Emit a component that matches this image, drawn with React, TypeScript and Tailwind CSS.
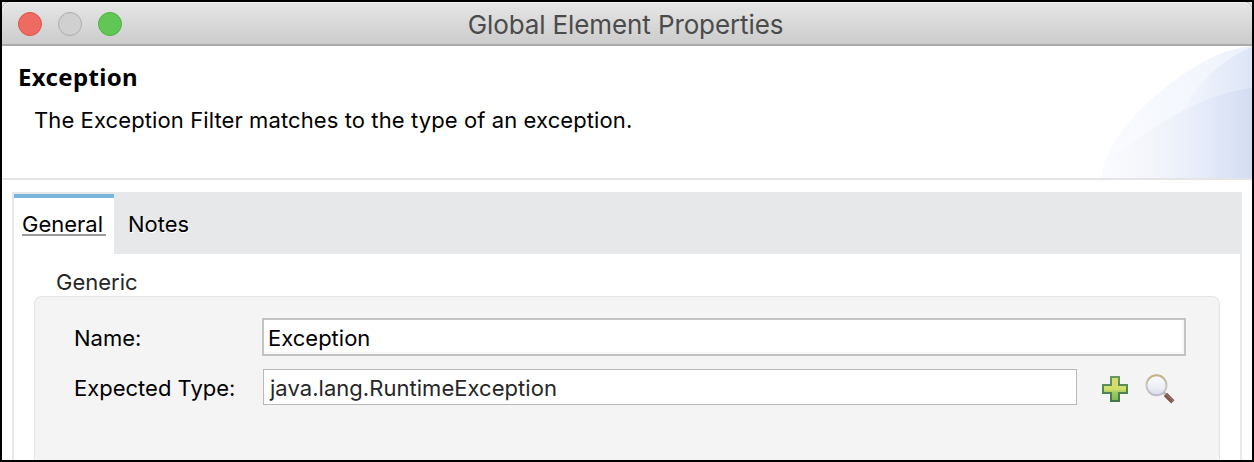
import React from "react";

function TrafficLights() {
  return (
    <div className="absolute left-[16px] top-[10px] flex gap-4">
      <span className="h-6 w-6 rounded-full border border-[#e0524a] bg-[#ed6b60]" />
      <span className="h-6 w-6 rounded-full border border-[#aeaeae] bg-[#d0d0d0]" />
      <span className="h-6 w-6 rounded-full border border-[#4eb141] bg-[#62c655]" />
    </div>
  );
}

function BannerArt() {
  return (
    <svg className="h-[132px] w-[150px]" viewBox="0 0 150 132" fill="none">
      <defs>
        <linearGradient id="outer" x1="0" y1="0" x2="150" y2="0" gradientUnits="userSpaceOnUse">
          <stop offset="0" stopColor="#f9fbff" />
          <stop offset="0.6" stopColor="#f4f7fd" />
          <stop offset="1" stopColor="#ecf1fb" />
        </linearGradient>
        <linearGradient id="middle" x1="80" y1="0" x2="150" y2="0" gradientUnits="userSpaceOnUse">
          <stop offset="0" stopColor="#f3f6fd" />
          <stop offset="1" stopColor="#dde5f6" />
        </linearGradient>
        <linearGradient id="lower" x1="0" y1="0" x2="150" y2="0" gradientUnits="userSpaceOnUse">
          <stop offset="0" stopColor="#f9fbff" />
          <stop offset="0.35" stopColor="#f3f5fa" />
          <stop offset="0.6" stopColor="#e9eefa" />
          <stop offset="0.85" stopColor="#dbe3f5" />
          <stop offset="1" stopColor="#d3dcf2" />
        </linearGradient>
      </defs>
      <path d="M0 132C1 101 31 68 58 46C86 23 116 3 150 0V132Z" fill="url(#outer)" />
      <path d="M80 68C91 42 115 16 150 1V60Z" fill="url(#middle)" />
      <path d="M0 132C3 119 11 111 21 104C59 75 101 48 150 42V132Z" fill="url(#lower)" />
    </svg>
  );
}

function PlusIcon() {
  return (
    <svg className="mt-px h-[28px] w-[28px]" viewBox="0 0 28 28">
      <defs>
        <linearGradient id="plus" x1="0" y1="2" x2="0" y2="26" gradientUnits="userSpaceOnUse">
          <stop offset="0" stopColor="#d5dc6c" />
          <stop offset="0.5" stopColor="#d3e06c" />
          <stop offset="0.65" stopColor="#9dcb60" />
          <stop offset="1" stopColor="#80b954" />
        </linearGradient>
        <linearGradient id="plusEdge" x1="0" y1="0" x2="0" y2="28" gradientUnits="userSpaceOnUse">
          <stop offset="0" stopColor="#6b9b64" />
          <stop offset="1" stopColor="#3e7449" />
        </linearGradient>
      </defs>
      <path d="M10 2H18V10H26V18H18V26H10V18H2V10H10Z" fill="url(#plus)" stroke="url(#plusEdge)" strokeWidth="2" />
    </svg>
  );
}

function SearchIcon() {
  return (
    <svg className="h-[30px] w-[30px]" viewBox="0 0 30 30">
      <defs>
        <linearGradient id="lens" x1="0" y1="2" x2="0" y2="22" gradientUnits="userSpaceOnUse">
          <stop offset="0" stopColor="#fafbff" />
          <stop offset="0.6" stopColor="#eceef5" />
          <stop offset="1" stopColor="#d5d9e6" />
        </linearGradient>
        <linearGradient id="rim" x1="0" y1="1" x2="0" y2="23" gradientUnits="userSpaceOnUse">
          <stop offset="0" stopColor="#c3b07b" />
          <stop offset="0.5" stopColor="#c9c6bf" />
          <stop offset="1" stopColor="#b4bed0" />
        </linearGradient>
      </defs>
      <path d="M18.5 18.5L21 21" stroke="#bcb5b6" strokeWidth="3" />
      <path d="M20.5 20.5L27.8 27.8" stroke="#80594f" strokeWidth="4.6" />
      <path d="M21.5 20.5L28 27" stroke="#a07a70" strokeWidth="1" />
      <circle cx="11.5" cy="11.3" r="10" fill="url(#lens)" stroke="url(#rim)" strokeWidth="2" />
    </svg>
  );
}

export default function App() {
  return (
    <div className="flex h-[462px] w-[1254px] flex-col overflow-hidden border-2 border-black bg-[#eeeeee] font-['Inter',sans-serif] text-[22px] text-black">
      <header className="relative flex h-[44px] shrink-0 items-center justify-center rounded-t-[9px] border-b-2 border-[#a9a9a9] bg-linear-to-b from-[#e6e6e6] to-[#cccccc] shadow-[inset_0_1px_0_#f3f3f3,0_0_0_1px_#bdbdbd]">
        <TrafficLights />
        <h1 className="whitespace-nowrap pr-[3px] pt-[3px] text-[26px] leading-[44px] tracking-[-0.11px] text-[#4b4b4b]">Global Element Properties</h1>
      </header>

      <section className="relative flex h-[134px] shrink-0 justify-between border-b-2 border-[#e5e5e5] bg-white pl-4">
        <div className="pt-[15px]">
          <h2 className="font-['Noto_Sans',sans-serif] text-[24px] font-bold leading-[32px] tracking-[0.35px]">Exception</h2>
          <p className="whitespace-nowrap pl-4 pt-[11px] leading-[32px] tracking-[0.1px]">The Exception Filter matches to the type of an exception.</p>
        </div>
        <BannerArt />
      </section>

      <main className="flex min-h-0 flex-1 flex-col bg-white px-[10px] pt-3">
        <div className="flex min-h-0 flex-1 flex-col border-x-2 border-[#e7e8ea]">
          <nav className="flex h-[62px] shrink-0 bg-[#e7e8ea] pt-0.5">
            <div className="h-[60px] w-[100px] border-t-4 border-[#79b4dc] bg-white pl-2 pt-[10px]">
              <div className="h-[28px] w-[84px] border-b-2 border-[#999] leading-[33px]">General</div>
            </div>
            <div className="pl-[14px] pt-[14px] leading-[33px] [text-shadow:1px_1px_0_white]">Notes</div>
          </nav>
          <div className="flex min-h-0 flex-1 flex-col px-5">
            <div className="h-[42px] shrink-0 pl-[22px] pt-[12px] leading-[33px] text-[#262626]">Generic</div>
            <div className="flex min-h-0 flex-1 flex-col gap-[13px] rounded-t-[8px] border border-b-0 border-[#e4e4e4] bg-[#f4f4f4] pl-[39px] pt-[21px]">
              <div className="flex h-[38px] shrink-0">
                <label className="w-[188px] leading-[41px]">Name:</label>
                <div className="w-[924px] border-2 border-[#c3c3c3] bg-white pl-1 leading-[37px] shadow-[inset_-2px_-2px_0_#f7f7f7]">Exception</div>
              </div>
              <div className="flex h-[36px] shrink-0">
                <label className="w-[189px] leading-[39px]">Expected Type:</label>
                <div className="w-[814px] border border-[#b9b9b9] bg-white pl-[6px] leading-[37px] tracking-[0.04px] text-[#262626]">java.lang.RuntimeException</div>
                <div className="flex gap-[16px] pl-[24px] pt-[5px]">
                  <PlusIcon />
                  <SearchIcon />
                </div>
              </div>
            </div>
          </div>
        </div>
      </main>
    </div>
  );
}
